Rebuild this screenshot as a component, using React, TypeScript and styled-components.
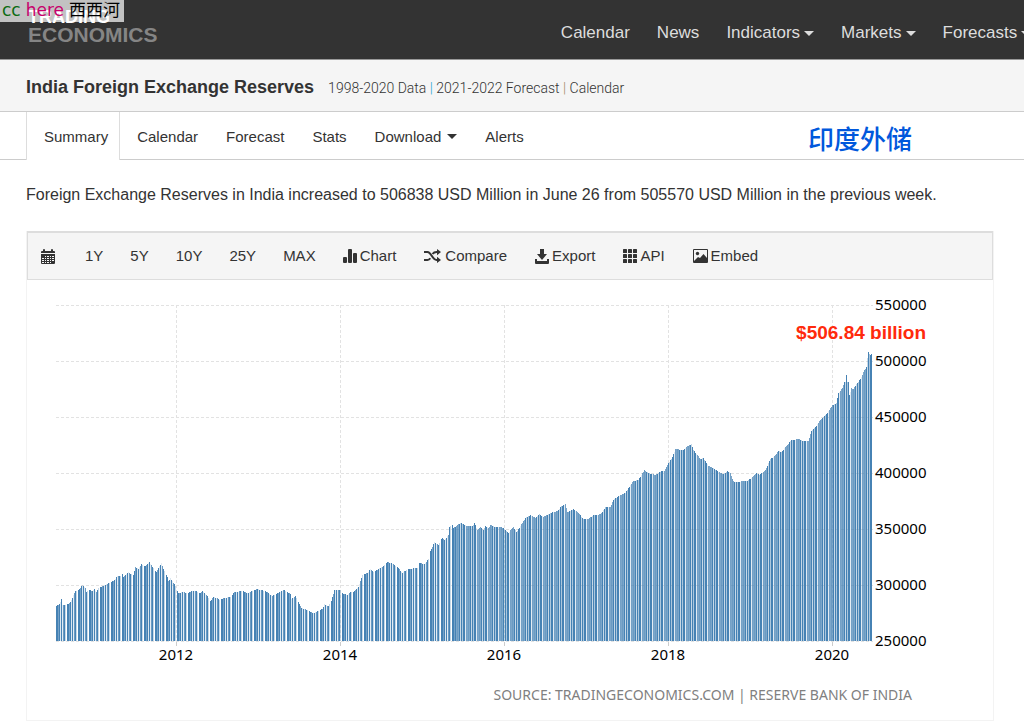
import React from "react";
import styled, { createGlobalStyle } from "styled-components";

const GlobalStyle = createGlobalStyle`
  * { box-sizing: border-box; }
  body {
    margin: 0;
    background: #fff;
    color: #333;
    font-family: "Liberation Sans", "Noto Sans CJK SC", sans-serif;
    overflow-x: hidden;
  }
  a { color: inherit; text-decoration: none; }
`;

const Page = styled.div`
  position: relative;
`;

const Watermark = styled.div`
  position: absolute;
  top: 0;
  left: 0;
  display: flex;
  gap: 5px;
  height: 22px;
  padding: 0 4px 0 2px;
  background: rgba(255, 255, 255, 0.7);
  font: 17px/21px "DejaVu Sans", "Noto Sans CJK SC", sans-serif;
  color: #000;
`;

const WatermarkPart = styled.span<{ $color: string }>`
  color: ${(p) => p.$color};
`;

const Header = styled.header`
  display: flex;
  height: 60px;
  padding-left: 28px;
  background: #333;
  border-bottom: 1px solid #999;
  overflow: hidden;
`;

const Logo = styled.a`
  flex: 0 0 53.5%;
  padding-top: 9px;
  font-weight: 700;
`;

const LogoLine = styled.span<{ $size: number; $color: string }>`
  display: block;
  font-size: ${(p) => p.$size}px;
  line-height: 17px;
  color: ${(p) => p.$color};
`;

const MainNav = styled.nav`
  display: flex;
  flex: none;
  gap: 27px;
  align-items: center;
  padding-top: 7px;
  font-size: 17px;
  color: #ddd;
`;

const NavLink = styled.a`
  display: flex;
  align-items: center;
  gap: 4px;
`;

const Caret = styled.span`
  border: 5px solid transparent;
  border-top-color: currentColor;
  border-bottom: 0;
`;

const TitleBar = styled.div`
  display: flex;
  align-items: baseline;
  gap: 14px;
  height: 52px;
  padding: 15px 26px 0;
  background: #f5f5f5;
  border-bottom: 1px solid #ccc;
`;

const Title = styled.h1`
  margin: 0;
  font-size: 18px;
  line-height: 24px;
`;

const SubLinks = styled.div`
  font: 300 14px/24px Roboto, sans-serif;
`;

const Divider = styled.span<{ $color: string }>`
  color: ${(p) => p.$color};
`;

const TabBar = styled.nav`
  display: flex;
  height: 48px;
  padding-left: 26px;
  border-bottom: 1px solid #ccc;
  font-size: 15px;
`;

const Tab = styled.a<{ $active?: boolean }>`
  display: flex;
  align-items: center;
  gap: 6px;
  height: 48px;
  margin-right: ${(p) => (p.$active ? 3 : 0)}px;
  padding: 0 ${(p) => (p.$active ? 11 : 14)}px 0 ${(p) => (p.$active ? 17 : 14)}px;
  border: solid #ddd;
  border-width: ${(p) => (p.$active ? "0 1px" : "0")};
  background: ${(p) => (p.$active ? "#fff" : "none")};
`;

const Note = styled.strong`
  margin: 8px 112px 0 auto;
  font: 500 26px/36px "Noto Sans CJK SC", sans-serif;
  color: #0058dc;
`;

const Content = styled.main`
  padding: 25px 30px 0 26px;
`;

const Summary = styled.p`
  margin: 0 0 26px;
  font-size: 16px;
  line-height: 20px;
`;

const ChartCard = styled.section`
  border: 1px solid #f3f3f3;
  border-top: 0;
`;

const Toolbar = styled.div`
  display: flex;
  height: 49px;
  border: 1px solid #ddd;
  border-top-width: 2px;
  background: #f5f5f5;
`;

const ToolButton = styled.button<{ $range?: boolean }>`
  display: flex;
  align-items: center;
  gap: 3px;
  padding: 0 ${(p) => (p.$range ? 13 : 14)}px 0 14px;
  border: 0;
  background: none;
  color: #333;
  font: 15px/20px "Liberation Sans", sans-serif;
  &:first-child { padding-left: 13px; padding-right: 16px; }
`;

const ChartSvg = styled.svg`
  display: block;
  width: 100%;
  height: auto;
`;

const AxisLabel = styled.text`
  font: 15px "Noto Sans", "Open Sans", sans-serif;
  fill: #000;
`;

const SourceLabel = styled.text`
  font: 14px "Noto Sans", "Open Sans", sans-serif;
  fill: #808080;
`;

const Callout = styled.text`
  font: 700 19px "Liberation Sans", sans-serif;
  fill: #ff2a0c;
`;

const Icon = styled.svg`
  flex: none;
  fill: currentColor;
`;

const CalendarIcon = () => (
  <Icon width="14" height="15" viewBox="0 0 14 15">
    <path d="M0 4V3q0-1 1-1h1V1q0-1 1-1t1 1v1h6V1q0-1 1-1t1 1v1h1q1 0 1 1v1z" />
    <path
      fillRule="evenodd"
      d="M0 5h14v9q0 1-1 1H1q-1 0-1-1zM4 7v1h1V7zm2 0v1h2V7zm3 0v1h1V7zm2 0v1h2V7zM1 9v1h2V9zm3 0v1h1V9zm2 0v1h2V9zm3 0v1h1V9zm2 0v1h2V9zM1 11v1h2v-1zm3 0v1h1v-1zm2 0v1h2v-1zm3 0v1h1v-1zm2 0v1h2v-1zM1 13v1h2v-1zm3 0v1h1v-1zm2 0v1h2v-1zm3 0v1h1v-1z"
    />
  </Icon>
);

const StatsIcon = () => (
  <Icon width="14" height="14" viewBox="0 0 14 14">
    <rect x="0" y="8" width="4" height="6" rx="1" />
    <rect x="5" y="0" width="4" height="14" rx="1" />
    <rect x="10" y="4" width="4" height="10" rx="1" />
  </Icon>
);

const RandomIcon = () => (
  <Icon width="18" height="14" viewBox="0 0 18 14">
    <path
      d="M0 3h3.5c3.8 0 4.700 8 9 8H14M0 11h3.500q1.700 0 2.800-1.700M8.500 5Q10 3 12.500 3H14"
      fill="none"
      stroke="currentColor"
      strokeWidth="2"
    />
    <path d="M13 0l4 3-4 3.200zM13 7.800l4 3.200-4 3z" />
  </Icon>
);

const SaveIcon = () => (
  <Icon width="14" height="15" viewBox="0 0 14 15">
    <path d="M5 0h4v5h3l-5 6-5-6h3zM0 10h2v2h10v-2h2v4q0 1-1 1H1q-1 0-1-1z" />
  </Icon>
);

const GridIcon = () => (
  <Icon width="14" height="14" viewBox="0 0 14 14">
    {[0, 5, 10].map((y) =>
      [0, 5, 10].map((x) => <rect key={`${x}-${y}`} x={x} y={y} width="4" height="4" rx="0.600" />)
    )}
  </Icon>
);

const PictureIcon = () => (
  <Icon width="15" height="14" viewBox="0 0 15 14">
    <path
      fillRule="evenodd"
      d="M1 0h13q1 0 1 1v12q0 1-1 1H1q-1 0-1-1V1q0-1 1-1zM1 1v11l4-4 2 1 3.500-4L14 9V1z"
    />
    <circle cx="4.500" cy="4.500" r="1.700" />
  </Icon>
);

/* Outline of the weekly series: horizontal position and height of the bar top. */
const OUTLINE: [number, number][] = [
  [56, 606], [59, 604], [61, 599], [62, 605], [66, 605], [70, 602], [75, 591], [78, 590], [82, 585],
  [85, 588], [86, 592], [89, 590], [92, 591], [94, 589], [96, 592], [98, 588], [103, 586], [108, 583],
  [113, 581], [117, 576], [120, 576], [121, 570], [123, 577], [128, 572], [130, 574], [133, 575],
  [135, 567], [138, 569], [141, 564], [145, 566], [149, 562], [152, 567], [156, 572], [159, 566],
  [161, 563], [163, 569], [167, 577], [168, 581], [170, 578], [174, 584], [178, 593], [182, 592],
  [187, 593], [192, 591], [196, 591], [200, 593], [202, 591], [207, 596], [210, 601], [213, 597],
  [217, 598], [219, 600], [223, 598], [230, 597], [234, 592], [243, 591], [247, 593], [252, 591],
  [257, 589], [265, 591], [272, 596], [277, 593], [284, 590], [290, 594], [291, 599], [295, 596],
  [298, 602], [301, 608], [307, 610], [313, 613], [317, 611], [322, 609], [324, 604], [328, 606],
  [331, 601], [334, 590], [340, 590], [341, 593], [347, 595], [350, 592], [353, 592], [358, 587],
  [362, 575], [367, 573], [370, 569], [373, 572], [378, 569], [383, 566], [387, 562], [393, 564],
  [398, 568], [402, 573], [407, 569], [417, 568], [419, 563], [424, 564], [428, 559], [430, 551],
  [434, 542], [438, 545], [440, 540], [442, 538], [444, 540], [448, 535], [449, 527], [452, 525],
  [453, 528], [460, 523], [467, 526], [472, 526], [474, 523], [477, 530], [480, 527], [483, 530],
  [485, 526], [488, 528], [490, 525], [495, 527], [500, 527], [503, 528], [508, 533], [510, 530],
  [513, 527], [516, 532], [520, 526], [525, 518], [530, 515], [535, 518], [539, 514], [543, 517],
  [550, 513], [557, 511], [561, 506], [565, 504], [567, 512], [573, 509], [578, 513], [583, 519],
  [588, 519], [593, 515], [598, 515], [602, 512], [605, 507], [610, 507], [613, 500], [618, 496],
  [625, 493], [628, 488], [633, 481], [638, 480], [644, 470], [648, 473], [655, 475], [661, 471],
  [664, 471], [668, 463], [672, 457], [675, 449], [683, 450], [687, 446], [691, 444], [693, 450],
  [700, 459], [703, 458], [708, 466], [713, 468], [718, 472], [723, 474], [727, 471], [730, 473],
  [732, 479], [734, 482], [747, 481], [753, 476], [756, 473], [759, 475], [765, 470], [770, 459],
  [774, 456], [778, 451], [781, 452], [785, 447], [791, 440], [799, 439], [803, 441], [808, 441],
  [811, 431], [815, 427], [819, 421], [826, 414], [832, 405], [836, 403], [838, 393], [842, 388],
  [844, 382], [845, 382], [846, 375], [847, 382], [848, 382], [849, 395], [851, 388], [853, 389],
  [856, 384], [858, 382], [861, 377], [863, 372], [866, 367], [867, 358], [868, 352], [870, 355],
  [872, 353],
];

const BASE = 641;
const PLOT_LEFT = 56;
const COLUMN_COUNT = 816;

/* Seven weekly bars share eleven columns, so their coverage repeats with that period. */
const EARLY_SHADES = [1, 1, 0.75, 1, 0.2, 1, 0.15, 0.8, 1, 0.3, 0];
const LATE_SHADES = [1, 1, 0.15, 0.75, 0.7, 0.8, 0.7, 1, 0.3, 1, 0.45];

function topAt(x: number) {
  const i = OUTLINE.findIndex((p) => p[0] >= x);
  if (i <= 0) return OUTLINE[i < 0 ? OUTLINE.length - 1 : 0][1];
  const [x0, y0] = OUTLINE[i - 1];
  const [x1, y1] = OUTLINE[i];
  return Math.round(y0 + ((y1 - y0) * (x - x0)) / (x1 - x0));
}

const COLUMNS = Array.from({ length: COLUMN_COUNT }, (_, i) => {
  const shades = i < 400 ? EARLY_SHADES : LATE_SHADES;
  const x = PLOT_LEFT + i;
  return { x, y: topAt(x), shade: shades[i % 11] };
});

const VALUES = [550000, 500000, 450000, 400000, 350000, 300000, 250000];
const YEARS = [2012, 2014, 2016, 2018, 2020];

const ReservesChart = () => (
  <ChartSvg viewBox="27 280 966 440" role="img" aria-label="India foreign exchange reserves">
    <g stroke="#e2e2e2" strokeDasharray="3 2">
      {VALUES.map((v, i) => (
        <line key={v} x1="56" x2="873" y1={305.5 + i * 56} y2={305.5 + i * 56} />
      ))}
      {YEARS.map((year, i) => (
        <line key={year} x1={176.5 + i * 164} x2={176.5 + i * 164} y1="305" y2="641" />
      ))}
    </g>
    <g fill="#4682b4">
      {COLUMNS.map((c) => (
        <rect key={c.x} x={c.x} y={c.y} width="1" height={BASE - c.y} fillOpacity={c.shade} />
      ))}
    </g>
    {YEARS.map((year, i) => (
      <g key={year}>
        <line x1={176.5 + i * 164} x2={176.5 + i * 164} y1="642" y2="646" stroke="#ccc" />
        <AxisLabel x={176 + i * 164} y="660" textAnchor="middle">{year}</AxisLabel>
      </g>
    ))}
    {VALUES.map((v, i) => (
      <AxisLabel key={v} x="875" y={310 + i * 56}>{v}</AxisLabel>
    ))}
    <Callout x="926" y="339" textAnchor="end">$506.84 billion</Callout>
    <SourceLabel x="912" y="700" textAnchor="end">
      SOURCE: TRADINGECONOMICS.COM | RESERVE BANK OF INDIA
    </SourceLabel>
  </ChartSvg>
);

const NAV = [
  { label: "Calendar" },
  { label: "News" },
  { label: "Indicators", menu: true },
  { label: "Markets", menu: true },
  { label: "Forecasts", menu: true },
];

const TABS = [
  { label: "Summary", active: true },
  { label: "Calendar" },
  { label: "Forecast" },
  { label: "Stats" },
  { label: "Download", menu: true },
  { label: "Alerts" },
];

const TOOLS = [
  { label: "Chart", icon: <StatsIcon /> },
  { label: "Compare", icon: <RandomIcon /> },
  { label: "Export", icon: <SaveIcon /> },
  { label: "API", icon: <GridIcon /> },
  { label: "Embed", icon: <PictureIcon /> },
];

export default function App() {
  return (
    <Page>
      <GlobalStyle />
      <Header>
        <Logo href="#">
          <LogoLine $size={18} $color="#fff">TRADING</LogoLine>
          <LogoLine $size={21} $color="#858585">ECONOMICS</LogoLine>
        </Logo>
        <MainNav>
          {NAV.map((n) => (
            <NavLink key={n.label} href="#">
              {n.label}
              {n.menu && <Caret />}
            </NavLink>
          ))}
        </MainNav>
      </Header>
      <TitleBar>
        <Title>India Foreign Exchange Reserves</Title>
        <SubLinks>
          <a href="#">1998-2020 Data</a> <Divider $color="#2aa5d0">|</Divider>{" "}
          <a href="#">2021-2022 Forecast</a> <Divider $color="#a08a60">|</Divider>{" "}
          <a href="#">Calendar</a>
        </SubLinks>
      </TitleBar>
      <TabBar>
        {TABS.map((t) => (
          <Tab key={t.label} href="#" $active={t.active}>
            {t.label}
            {t.menu && <Caret />}
          </Tab>
        ))}
        <Note>印度外储</Note>
      </TabBar>
      <Content>
        <Summary>
          Foreign Exchange Reserves in India increased to 506838 USD Million in June 26 from 505570
          USD Million in the previous week.
        </Summary>
        <ChartCard>
          <Toolbar>
            <ToolButton aria-label="Date range"><CalendarIcon /></ToolButton>
            {["1Y", "5Y", "10Y", "25Y", "MAX"].map((r) => (
              <ToolButton key={r} $range>{r}</ToolButton>
            ))}
            {TOOLS.map((t) => (
              <ToolButton key={t.label}>
                {t.icon}
                {t.label}
              </ToolButton>
            ))}
          </Toolbar>
          <ReservesChart />
        </ChartCard>
      </Content>
      <Watermark>
        <WatermarkPart $color="#0b6b12">cc</WatermarkPart>
        <WatermarkPart $color="#c8006c">here</WatermarkPart>
        <WatermarkPart $color="#000">西西河</WatermarkPart>
      </Watermark>
    </Page>
  );
}
